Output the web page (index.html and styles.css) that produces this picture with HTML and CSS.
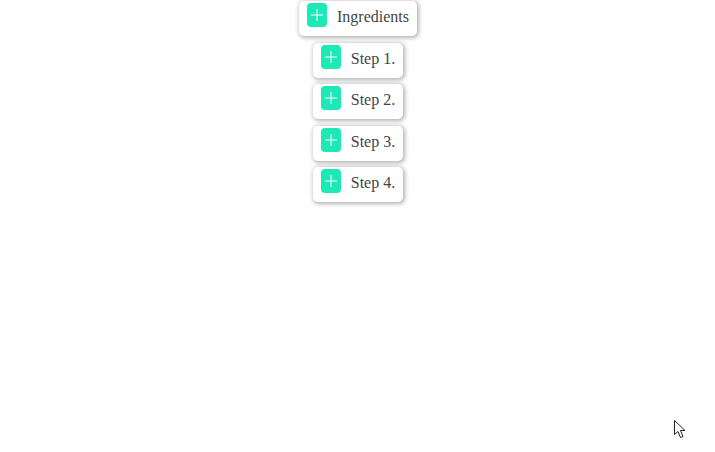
FILE: index.html
```html
<!DOCTYPE html>
<html lang="en">

<head>
  <meta charset="UTF-8">
  <title>Recipe</title>
  <link rel="stylesheet" href="styles.css">
</head>

<body>
  <div id="list">
    <div class="step">
      <span class="add"><svg width="14" height="14" viewBox="0 0 14 14"><path d="M7 1v12M1 7h12" /></svg></span>
      <span class="name">Ingredients</span>
    </div>
    <div class="step">
      <span class="add"><svg width="14" height="14" viewBox="0 0 14 14"><path d="M7 1v12M1 7h12" /></svg></span>
      <span class="name">Step 1.</span>
    </div>
    <div class="step">
      <span class="add"><svg width="14" height="14" viewBox="0 0 14 14"><path d="M7 1v12M1 7h12" /></svg></span>
      <span class="name">Step 2.</span>
    </div>
    <div class="step">
      <span class="add"><svg width="14" height="14" viewBox="0 0 14 14"><path d="M7 1v12M1 7h12" /></svg></span>
      <span class="name">Step 3.</span>
    </div>
    <div class="step">
      <span class="add"><svg width="14" height="14" viewBox="0 0 14 14"><path d="M7 1v12M1 7h12" /></svg></span>
      <span class="name">Step 4.</span>
    </div>
  </div>
  <svg id="cursor" width="14" height="21" viewBox="0 0 14 21">
    <path d="M1.5 1.5v14l3.5-3 2.5 6 2.5-1-2.5-6h4.5z" />
  </svg>
</body>

</html>
```

FILE: styles.css
```css
html, body {
  height: 100%;
}

body {
  margin: 0;
  background-color: #fff;
  color: #444;
  font-family: "Liberation Serif", serif;
  font-size: 16px;
  overflow: hidden;
}

#list {
  display: flex;
  flex-direction: column;
  align-items: center;
  gap: 6.5px;
  padding: 1px 0 0 1px;
}

.step {
  display: flex;
  align-items: flex-start;
  gap: 10px;
  height: 35px;
  box-sizing: border-box;
  padding: 2px 8px 0;
  border-radius: 5px;
  background-color: #fff;
  box-shadow: 1px 1px 4px 1px rgba(0, 0, 0, 0.3);
}

.add {
  display: flex;
  align-items: center;
  justify-content: center;
  width: 20px;
  height: 24px;
  border-radius: 4px;
  background-color: #1de9b6;
}

.add path {
  fill: none;
  stroke: #fff;
  stroke-width: 1;
}

.name {
  line-height: 28px;
}

#cursor {
  position: absolute;
  left: 673px;
  top: 419px;
}

#cursor path {
  fill: #fff;
  stroke: #222;
  stroke-width: 1;
}
```
